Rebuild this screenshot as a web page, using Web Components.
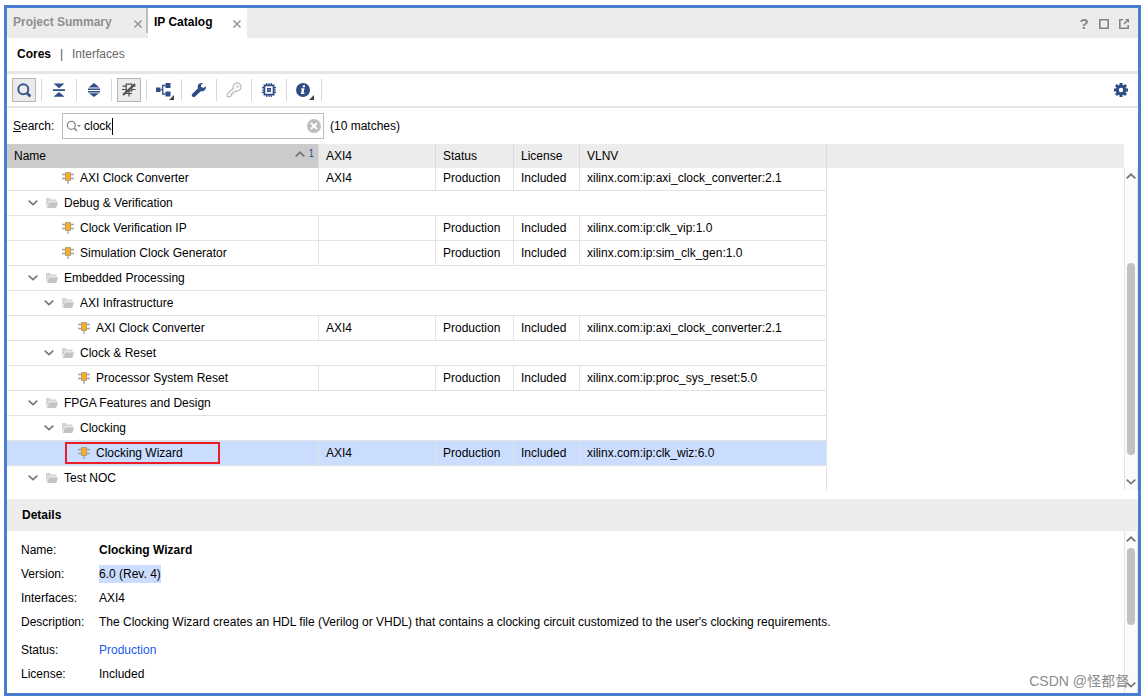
<!DOCTYPE html>
<html lang="en">
<head>
<meta charset="utf-8">
<title>IP Catalog</title>
<style>
  body { margin: 0; background: #fff; color: #000; font: 12px/16px "Liberation Sans", "Noto Sans CJK SC", Arial, sans-serif; }
</style>
</head>
<body>
<ip-catalog-app></ip-catalog-app>
<script>
const ICONS = {
  search: ['0 0 16 16', '<circle cx="7.300" cy="7.300" r="5" fill="none" stroke="#3a568e" stroke-width="2"/><path d="M11 11 14.400 14.400" stroke="#3a568e" stroke-width="2.800"/>'],
  collapse: ['0 0 16 16', '<path d="M2 7.200h12v1.800H2zM2.500 1.500h11L8 6.200zM2.500 14.700h11L8 10z" fill="#2f4d86"/>'],
  expand: ['0 0 16 16', '<path d="M2.500 5.500 8 1l5.500 4.500zM2 6.400h12V8H2zM2 9h12v1.500H2zM3 11.200h10L8 15z" fill="#2f4d86"/>'],
  chipoff: ['0 0 16 16', '<path d="M5.200 2.200h5.600v6.600H5.200zM1.500 4.200h3.700M1 7.500h4.200M10.800 4.200h3.700M10.800 7.500h3.700M8 9v5.500M5 11.500h6" fill="none" stroke="#4d4d4d" stroke-width="1.200"/><path d="M2 13 14 2" stroke="#4d4d4d" stroke-width="2"/>'],
  hierarchy: ['0 0 20 20', '<path d="M2 7.500h4.500V12H2zM11.500 3h5v5h-5zM11.500 11.500h5v5h-5z" fill="#2f4d86"/><path d="M6.500 9.700h2M11.500 5.500H8.700v8.500h2.800" fill="none" stroke="#2f4d86" stroke-width="1.300"/><path d="M20 15v5h-5z" fill="#404040"/>'],
  wrench: ['0 0 16 16', '<path d="M14.800 4.200 12.300 6 10 4.800 10 3 12.200 1.200C10.200.5 7.800 1.300 7 3.300c-.5 1.200-.3 2.200 0 3L1.400 11.800c-.9.900-.8 2 0 2.800s2 .8 2.800 0l5.600-5.400c2.900.8 5.600-1.700 5-5z" fill="#2f4d86"/>'],
  key: ['0 0 16 16', '<path d="M7.300 6.300a4 4 0 1 1 2.600 2.500L8.500 10.200H7v1.600H5.300v1.600L4 14.700H1.300V12z" fill="none" stroke="#c0c0c0" stroke-width="1.300"/><circle cx="11.500" cy="4.500" r="1" fill="none" stroke="#c0c0c0"/>'],
  chip: ['0 0 16 16', '<path d="M3.400 3.400h9.200v9.200H3.400z" fill="none" stroke="#2f4d86" stroke-width="1.800"/><path d="M6 6h4v4H6z" fill="#2f4d86"/><path d="M7.400 7.400h1.200v1.200H7.400z" fill="#fff"/><path d="M5.700 1v2M8 1v2M10.300 1v2M5.700 13v2M8 13v2M10.300 13v2M1 5.700h2M1 8h2M1 10.300h2M13 5.700h2M13 8h2M13 10.300h2" stroke="#2f4d86" stroke-width="1.200"/>'],
  info: ['0 0 20 20', '<circle cx="9" cy="10" r="7" fill="#2f4d86"/><path d="M9 5.200h2.200l-.4 2H8.600zM7.400 8.300h3.100l-.9 4.400h1l-.3 1.300H6.900l.9-4.400h-.7z" fill="#fff"/><path d="M20 15v5h-5z" fill="#404040"/>'],
  gear: ['0 0 14 14', '<circle cx="7" cy="7" r="3.700" fill="none" stroke="#2f4d86" stroke-width="3"/><path d="M7 0v2.500M7 11.500V14M0 7h2.500M11.500 7H14M2 2l2 2M10 10l2 2M12 2l-2 2M4 10l-2 2" stroke="#2f4d86" stroke-width="3"/>'],
  close: ['0 0 8 8', '<path d="M.5.5l7 7M7.500.5l-7 7" stroke="#909090" stroke-width="1.400"/>'],
  maximize: ['0 0 10 10', '<path d="M.8.8h8.400v8.400H.8z" fill="none" stroke="#858585" stroke-width="1.600"/>'],
  popout: ['0 0 10 10', '<path d="M4 .8H.8v8.400h8.400V6" fill="none" stroke="#858585" stroke-width="1.600"/><path d="M6 0h4v4z" fill="#858585"/><path d="M5 5 8.500 1.500" stroke="#858585" stroke-width="1.600"/>'],
  find: ['0 0 16 12', '<circle cx="5.300" cy="5.300" r="4" fill="none" stroke="#8a8a8a" stroke-width="1.300"/><path d="M8.200 8.200 11 11" stroke="#8a8a8a" stroke-width="1.700"/><path d="M11 5h4l-2 2z" fill="#777"/>'],
  clear: ['0 0 14 14', '<circle cx="7" cy="7" r="7" fill="#bebebe"/><path d="M4 4l6 6M10 4l-6 6" stroke="#fff" stroke-width="1.800"/>'],
  up: ['0 0 10 6', '<path d="M.7 5.300 5 1.300l4.300 4" fill="none" stroke="#757575" stroke-width="1.800"/>'],
  down: ['0 0 10 6', '<path d="M.7.7 5 4.700 9.300.7" fill="none" stroke="#757575" stroke-width="1.600"/>'],
  folder: ['0 0 12 10', '<path d="M0 9V0h4l1 1.500h5.500V3.500H3z" fill="#d4d4d4"/><path d="M3 4.300h9L10.300 10H.8z" fill="#c4c4c4"/>'],
  core: ['0 0 12 12', '<path d="M0 2.500h12M0 6.500h12M6 8v4" stroke="#a4a4a4" stroke-width="1.300"/><path d="M3.500.6h5v7.800h-5z" fill="#f9ae2b" stroke="#b39c70"/>']
};

class UiIcon extends HTMLElement {
  constructor() { super(); this.attachShadow({ mode: 'open' }); }
  connectedCallback() {
    const [box, body] = ICONS[this.getAttribute('name')];
    const w = box.split(' ')[2], h = box.split(' ')[3];
    this.shadowRoot.innerHTML = `<style>:host{display:block;flex:none}svg{display:block}</style>
      <svg width="${w}" height="${h}" viewBox="${box}" aria-hidden="true">${body}</svg>`;
  }
}
customElements.define('ui-icon', UiIcon);

class ToolButton extends HTMLElement {
  constructor() { super(); this.attachShadow({ mode: 'open' }); }
  connectedCallback() {
    this.shadowRoot.innerHTML = `<style>
      :host { display: block; flex: none; }
      button { display: grid; place-items: center; width: 24px; height: 24px; box-sizing: border-box; padding: 0; border: 1px solid transparent; background: none; }
      :host([pressed]) button { background: #ececec; border-color: #b5b5b5; }
    </style><button type="button" aria-label="${this.getAttribute('label')}"><ui-icon name="${this.getAttribute('icon')}"></ui-icon></button>`;
  }
}
customElements.define('tool-button', ToolButton);

class ViewTab extends HTMLElement {
  constructor() {
    super();
    this.attachShadow({ mode: 'open' }).innerHTML = `<style>
      :host { display: flex; box-sizing: border-box; height: 30px; padding: 6px 6px 0; color: #8f8f8f; font-weight: bold; }
      :host([active]) { background: #fff; color: #000; }
      button { border: 0; background: none; padding: 0; font: inherit; color: inherit; height: 16px; line-height: 16px; }
      .close { margin: 2px 0 0 auto; display: grid; place-items: center; width: 8px; }
    </style><button type="button" role="tab"><slot></slot></button><button type="button" class="close" aria-label="Close"><ui-icon name="close"></ui-icon></button>`;
  }
}
customElements.define('view-tab', ViewTab);

class PaneScrollbar extends HTMLElement {
  constructor() {
    super();
    this.attachShadow({ mode: 'open' }).innerHTML = `<style>
      :host { display: flex; flex-direction: column; align-items: center; flex: none; width: 14px; box-sizing: border-box; border: solid #e4e4e4; border-width: 0 1px; background: #fbfbfb; }
      .arrow { display: grid; place-items: center; width: 12px; height: 16px; padding: 0; border: 0; background: none; flex: none; }
      .track { flex: 1; display: flex; flex-direction: column; }
      .before { flex: var(--before, 0); } .after { flex: var(--after, 1); }
      .thumb { flex: var(--thumb, 1); width: 8px; border-radius: 4px; background: #c1c1c1; }
    </style><button class="arrow" type="button" aria-label="Scroll up"><ui-icon name="up"></ui-icon></button>
    <div class="track"><div class="before"></div><div class="thumb"></div><div class="after"></div></div>
    <button class="arrow" type="button" aria-label="Scroll down"><ui-icon name="down"></ui-icon></button>`;
  }
}
customElements.define('pane-scrollbar', PaneScrollbar);

class SearchBar extends HTMLElement {
  constructor() {
    super();
    this.attachShadow({ mode: 'open' }).innerHTML = `<style>
      :host { display: flex; align-items: center; height: 36px; padding-left: 6px; }
      label { width: 49px; }
      .field { position: relative; display: flex; align-items: center; box-sizing: border-box; width: 262px; height: 26px; padding: 0 2px 0 3px; border: 1px solid #bdbdbd; }
      input { flex: 1; min-width: 0; margin: 0; padding: 0 0 0 2px; border: 0; outline: 0; background: none; font: inherit; color: inherit; }
      .caret { position: absolute; left: 49px; top: 4px; width: 1px; height: 17px; background: #000; }
      .clear { padding: 0; border: 0; background: none; }
      output { margin-left: 6px; }
    </style><label for="q"><u>S</u>earch:</label>
    <div class="field"><ui-icon name="find"></ui-icon><input id="q" type="text" value="clock"><span class="caret"></span>
    <button type="button" class="clear" aria-label="Clear"><ui-icon name="clear"></ui-icon></button></div>
    <output for="q">(10 matches)</output>`;
  }
}
customElements.define('search-bar', SearchBar);

const CORES = [
  { level: 1, name: 'AXI Clock Converter', cells: ['AXI4', 'Production', 'Included', 'xilinx.com:ip:axi_clock_converter:2.1'] },
  { level: 1, name: 'Debug &amp; Verification' },
  { level: 1, name: 'Clock Verification IP', cells: ['', 'Production', 'Included', 'xilinx.com:ip:clk_vip:1.0'] },
  { level: 1, name: 'Simulation Clock Generator', cells: ['', 'Production', 'Included', 'xilinx.com:ip:sim_clk_gen:1.0'] },
  { level: 1, name: 'Embedded Processing' },
  { level: 2, name: 'AXI Infrastructure' },
  { level: 2, name: 'AXI Clock Converter', cells: ['AXI4', 'Production', 'Included', 'xilinx.com:ip:axi_clock_converter:2.1'] },
  { level: 2, name: 'Clock &amp; Reset' },
  { level: 2, name: 'Processor System Reset', cells: ['', 'Production', 'Included', 'xilinx.com:ip:proc_sys_reset:5.0'] },
  { level: 1, name: 'FPGA Features and Design' },
  { level: 2, name: 'Clocking' },
  { level: 2, name: 'Clocking Wizard', selected: true, cells: ['AXI4', 'Production', 'Included', 'xilinx.com:ip:clk_wiz:6.0'] },
  { level: 1, name: 'Test NOC' }
];

class CoreTable extends HTMLElement {
  constructor() {
    super();
    const row = r => {
      const chev = r.cells ? '' : '<ui-icon name="down"></ui-icon>';
      const icon = `<ui-icon name="${r.cells ? 'core' : 'folder'}"></ui-icon>`;
      const mark = r.selected ? '<span class="mark"></span>' : '';
      const name = `<div class="name l${r.level}">${chev}${icon}<span>${r.name}</span>${mark}</div>`;
      return `<tr class="${r.cells ? 'item' : 'group'}${r.selected ? ' selected' : ''}">` + (r.cells
        ? `<td>${name}</td>${r.cells.map(c => `<td>${c}</td>`).join('')}`
        : `<td colspan="5">${name}</td>`) + '<td class="rest"></td></tr>';
    };
    this.attachShadow({ mode: 'open' }).innerHTML = `<style>
      :host { display: grid; grid-template-columns: 1fr 14px; grid-template-rows: 24px 1fr; }
      table { grid-row: 1 / 3; width: 100%; table-layout: fixed; border-collapse: separate; border-spacing: 0; }
      pane-scrollbar { grid-area: 2 / 2; --before: 79; --thumb: 192; --after: 19; }
      th, td { box-sizing: border-box; padding: 0 7px; text-align: left; font-weight: normal; border-right: 1px solid #e2e2e2; white-space: nowrap; }
      th { height: 24px; background: #ececec; border-color: #dadada; }
      th:first-child { background: #cbcbcb; }
      th:last-child, td.rest { border-right: 0; }
      td { height: 25px; border-bottom: 1px solid #e2e2e2; }
      td.rest, tr:last-child td { border-bottom: 0; }
      tbody tr:first-child td { height: 23px; padding-bottom: 2px; }
      tbody tr:last-child td { height: 24px; }
      tr.selected td:not(.rest) { background: #cbddff; }
      .sort { display: flex; justify-content: space-between; }
      .order { display: flex; gap: 3px; align-items: center; margin-right: -3px; font-size: 10px; line-height: 12px; height: 12px; color: #2f4d86; }
      .name { position: relative; display: flex; align-items: center; gap: 6px; height: 16px; }
      .name ui-icon[name="down"] { margin-right: 2px; }
      .group .l1 { padding-left: 14px; } .group .l2 { padding-left: 30px; }
      .item .l1 { padding-left: 48px; } .item .l2 { padding-left: 64px; }
      .mark { position: absolute; left: 51px; top: -3px; width: 155px; height: 22px; box-sizing: border-box; border: 2px solid #ed1c24; }
    </style>
    <table><colgroup><col style="width:312px"><col style="width:117px"><col style="width:78px"><col style="width:66px"><col style="width:247px"><col></colgroup>
    <thead><tr><th><div class="sort"><span>Name</span><span class="order"><ui-icon name="up"></ui-icon>1</span></div></th><th>AXI4</th><th>Status</th><th>License</th><th>VLNV</th><th></th></tr></thead>
    <tbody>${CORES.map(row).join('')}</tbody></table>
    <pane-scrollbar></pane-scrollbar>`;
  }
}
customElements.define('core-table', CoreTable);

class DetailsPane extends HTMLElement {
  constructor() {
    super();
    this.attachShadow({ mode: 'open' }).innerHTML = `<style>
      :host { display: flex; flex-direction: column; }
      h2 { margin: 0; padding: 8px 15px; background: #ececec; font-size: 12px; line-height: 16px; }
      .body { flex: 1; display: flex; }
      dl { flex: 1; display: grid; grid-template-columns: 78px 1fr; grid-template-rows: repeat(3, 24px) 28px repeat(2, 24px); align-content: start; line-height: 24px; margin: 0; padding: 7px 14px 0; }
      dd { margin: 0; }
      mark { display: inline-block; height: 18px; line-height: 18px; background: #cbddff; color: inherit; }
      a { color: #2459ee; text-decoration: none; }
      pane-scrollbar { --before: 1; --thumb: 77; --after: 52; }
    </style><h2>Details</h2>
    <div class="body"><dl>
      <dt>Name:</dt><dd><b>Clocking Wizard</b></dd>
      <dt>Version:</dt><dd><mark>6.0 (Rev. 4)</mark></dd>
      <dt>Interfaces:</dt><dd>AXI4</dd>
      <dt>Description:</dt><dd>The Clocking Wizard creates an HDL file (Verilog or VHDL) that contains a clocking circuit customized to the user's clocking requirements.</dd>
      <dt>Status:</dt><dd><a href="#">Production</a></dd>
      <dt>License:</dt><dd>Included</dd>
    </dl><pane-scrollbar></pane-scrollbar></div>`;
  }
}
customElements.define('details-pane', DetailsPane);

class IpCatalogApp extends HTMLElement {
  constructor() {
    super();
    const tools = [['search', 'Search', 1], ['collapse', 'Collapse all'], ['expand', 'Expand all'], ['chipoff', 'Hide incompatible', 1], ['hierarchy', 'Group by'], ['wrench', 'Customize'], ['key', 'License'], ['chip', 'Compatible parts'], ['info', 'Information']];
    this.attachShadow({ mode: 'open' }).innerHTML = `<style>
      :host { display: flex; box-sizing: border-box; min-height: 100vh; padding: 5px 3px 2px 4px; }
      main { position: relative; flex: 1; min-width: 0; display: flex; flex-direction: column; border: 3px solid #4a7dcf; }
      .tabs { display: flex; height: 30px; background: #ececec; }
      .tabs view-tab:first-child { width: 139px; padding-right: 4px; }
      .tabs view-tab[active] { width: 99px; }
      .split { width: 2px; height: 25px; background: #bcbcbc; }
      .window { margin-left: auto; padding: 2px 9px 0 0; display: flex; align-items: center; gap: 10px; }
      .window button { display: grid; place-items: center; width: 10px; height: 16px; padding: 0; border: 0; background: none; font: bold 15px/16px "Liberation Sans", sans-serif; color: #858585; }
      nav { display: flex; align-items: center; height: 32px; padding: 0 0 1px 10px; border-bottom: 3px solid #e6e6e6; }
      nav button { padding: 0; border: 0; background: none; font: inherit; color: #666; }
      nav button:first-child { font-weight: bold; color: #000; }
      nav span { width: 21px; text-align: center; color: #555; }
      .tools { display: flex; align-items: center; gap: 5px; height: 32px; padding: 0 5px; border-bottom: 2px solid #e6e6e6; }
      .tools i { width: 1px; height: 22px; background: #d9d9d9; }
      .tools tool-button:last-child { margin-left: auto; }
      core-table { margin-bottom: 9px; }
      details-pane { flex: 1; }
      .credit { position: absolute; right: 9px; bottom: 2px; color: #8c8c8c; font-size: 14px; line-height: 20px; }
    </style><main>
      <div class="tabs" role="tablist"><view-tab>Project Summary</view-tab><span class="split"></span><view-tab active>IP Catalog</view-tab>
        <div class="window"><button type="button">?</button><button type="button" aria-label="Maximize"><ui-icon name="maximize"></ui-icon></button><button type="button" aria-label="Float"><ui-icon name="popout"></ui-icon></button></div></div>
      <nav><button type="button">Cores</button><span>|</span><button type="button">Interfaces</button></nav>
      <div class="tools" role="toolbar">${tools.map(([i, l, p]) => `<tool-button icon="${i}" label="${l}"${p ? ' pressed' : ''}></tool-button><i></i>`).join('')}<tool-button icon="gear" label="Settings"></tool-button></div>
      <search-bar></search-bar>
      <core-table></core-table>
      <details-pane></details-pane>
      <div class="credit">CSDN @怪都督</div>
    </main>`;
  }
}
customElements.define('ip-catalog-app', IpCatalogApp);
</script>
</body>
</html>
